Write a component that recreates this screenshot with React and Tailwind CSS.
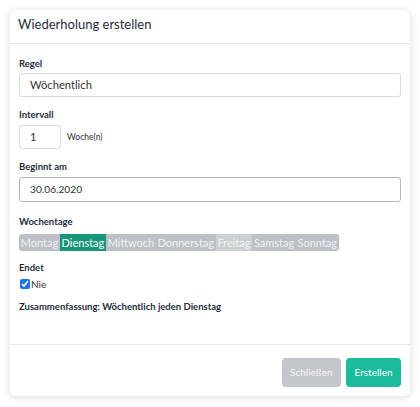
import React, { useState } from 'react';

const DAYS = ['Montag', 'Dienstag', 'Mittwoch', 'Donnerstag', 'Freitag', 'Samstag', 'Sonntag'];

const Label = ({ children, className = '' }) => (
  <label className={`block text-[9.5px] h-[10px] font-bold text-[#1f2d3d] leading-[10px] ${className}`}>{children}</label>
);

export default function App() {
  const [selected] = useState('Dienstag');

  return (
    <div className="w-[420px] h-[407px] bg-white pt-[10px] px-[10px] font-['Lato','Noto_Sans',sans-serif]">
      <div className="w-[400px] h-[386px] rounded-[6px] bg-white shadow-[0_1px_8px_rgba(0,0,0,0.15)] flex flex-col">
        <div className="h-[34px] shrink-0 border-b border-[#e8e8e8] flex items-center px-[8px]">
          <h2 className="text-[13px] text-[#1f2d3d] leading-none -mt-[4px]">Wiederholung erstellen</h2>
        </div>

        <div className="flex-1 px-[9px] pt-[15px]">
          <Label className="mb-[4px]">Regel</Label>
          <div className="h-[24px] border border-[#dcdcdc] rounded-[3px] flex items-center px-[10px] text-[11.2px] text-[#333]">
            Wöchentlich
          </div>

          <Label className="mt-[13px] mb-[5px]">Intervall</Label>
          <div className="flex items-center h-[24px]">
            <div className="w-[42px] h-[24px] border border-[#dcdcdc] rounded-[3px] flex items-center px-[10px] text-[11px] text-[#333]">1</div>
            <span className="ml-[6px] text-[8.5px] text-[#333]">Woche(n)</span>
          </div>

          <Label className="mt-[13px] mb-[5px]">Beginnt am</Label>
          <div className="h-[25px] border border-[#b3b8bd] rounded-[3px] flex items-center px-[10px] text-[10.2px] text-[#333]">
            30.06.2020
          </div>

          <Label className="mt-[15px] mb-[7px]">Wochentage</Label>
          <div className="flex w-fit rounded-[3px] overflow-hidden bg-[#bdc1c5] text-[11px] text-[#eef0f2] leading-none">
            {DAYS.map(d => (
              <span
                key={d}
                className={`h-[17px] flex items-center px-[1.7px] ${d === selected ? 'bg-[#17967a] text-white' : d === 'Freitag' ? 'bg-[#ccd0d3]' : ''}`}
              >
                {d}
              </span>
            ))}
          </div>

          <Label className="mt-[12px] mb-[5px]">Endet</Label>
          <label className="flex items-center h-[12px] text-[10px] text-[#333]">
            <input type="checkbox" defaultChecked className="w-[10px] h-[10px] m-0 ml-[1px] mr-[1px] accent-[#1a73e8]" />
            Nie
          </label>

          <Label className="mt-[12px]">Zusammenfassung: Wöchentlich jeden Dienstag</Label>
        </div>

        <div className="h-[52px] shrink-0 border-t border-[#e8e8e8] flex items-start justify-end gap-[5px] px-[9px] pt-[13px]">
          <button className="h-[29px] px-[8.5px] rounded-[4px] bg-[#c3c7cb] text-[#f2f3f4] text-[10px]">Schließen</button>
          <button className="h-[29px] px-[8.5px] rounded-[4px] bg-[#1abc9c] text-white text-[10px]">Erstellen</button>
        </div>
      </div>
    </div>
  );
}
